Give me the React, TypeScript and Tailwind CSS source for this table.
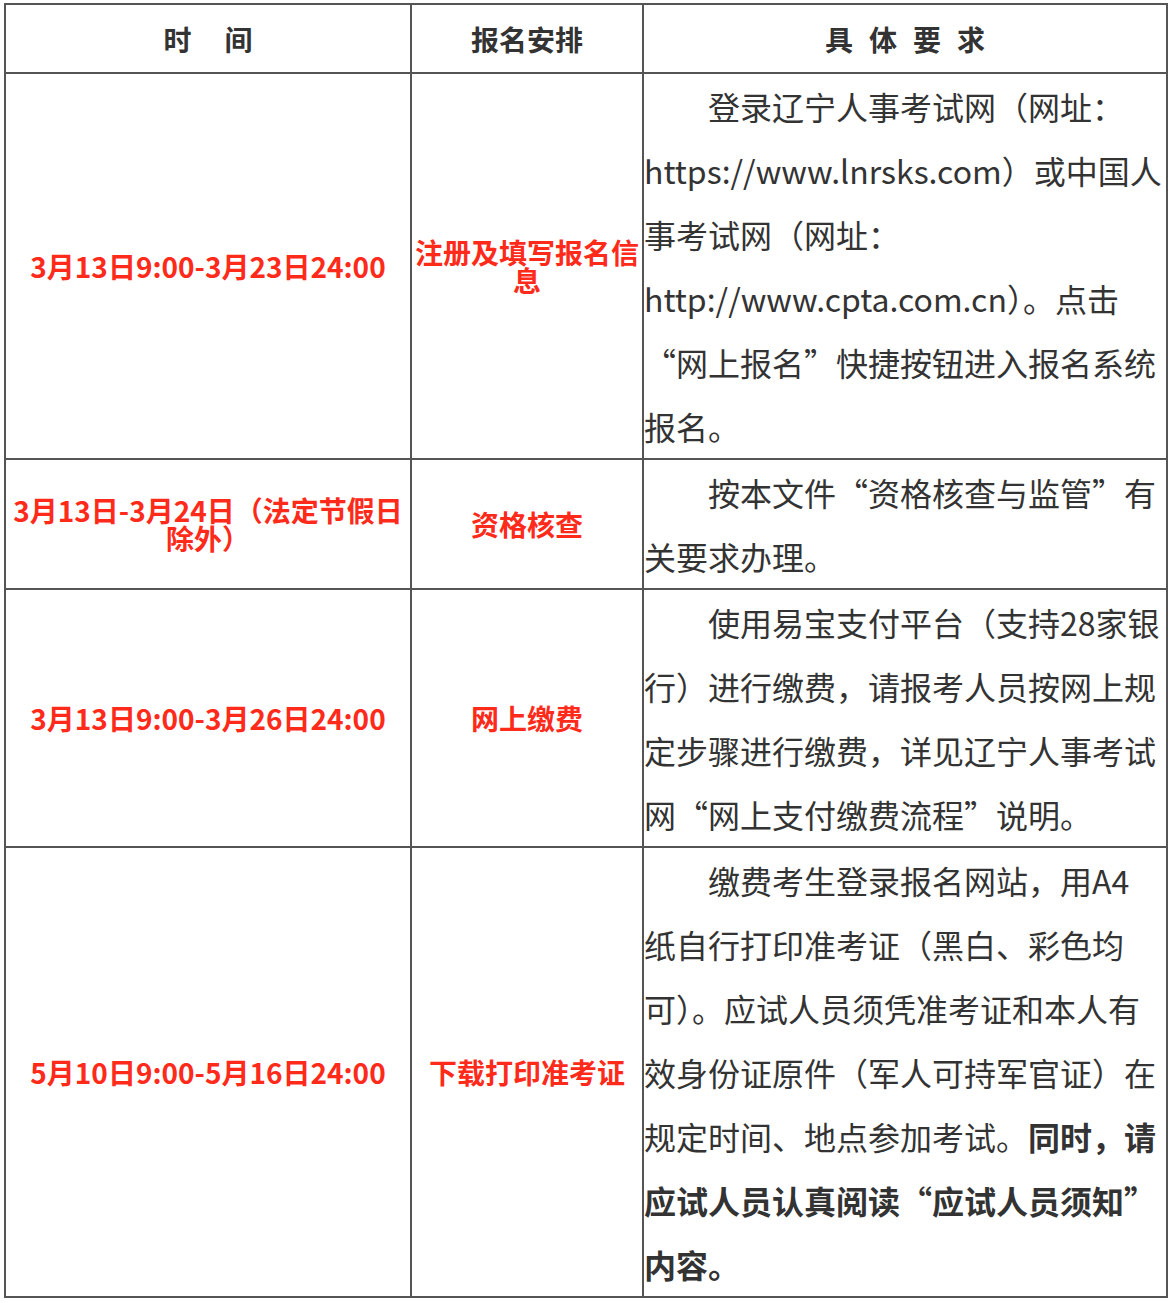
import React from "react";

interface Row {
  time: React.ReactNode;
  step: React.ReactNode;
  lines: React.ReactNode[];
}

const rows: Row[] = [
  {
    time: "3月13日9:00-3月23日24:00",
    step: "注册及填写报名信息",
    lines: [
      "登录辽宁人事考试网（网址：",
      "https://www.lnrsks.com）或中国人",
      "事考试网（网址：",
      "http://www.cpta.com.cn）。点击",
      "“网上报名”快捷按钮进入报名系统",
      "报名。",
    ],
  },
  {
    time: "3月13日-3月24日（法定节假日除外）",
    step: "资格核查",
    lines: ["按本文件“资格核查与监管”有", "关要求办理。"],
  },
  {
    time: "3月13日9:00-3月26日24:00",
    step: "网上缴费",
    lines: [
      "使用易宝支付平台（支持28家银",
      "行）进行缴费，请报考人员按网上规",
      "定步骤进行缴费，详见辽宁人事考试",
      "网“网上支付缴费流程”说明。",
    ],
  },
  {
    time: "5月10日9:00-5月16日24:00",
    step: "下载打印准考证",
    lines: [
      "缴费考生登录报名网站，用A4",
      "纸自行打印准考证（黑白、彩色均",
      "可）。应试人员须凭准考证和本人有",
      "效身份证原件（军人可持军官证）在",
      <>
        规定时间、地点参加考试。<b>同时，请</b>
      </>,
      <b>应试人员认真阅读“应试人员须知”</b>,
      <b>内容。</b>,
    ],
  },
];

const cell = "border-2 border-[#555] align-middle p-0";
const red = "text-[#ff2a1a] font-bold text-[28px] leading-[28px] text-center px-[2px]";

export default function App() {
  return (
    <div className="bg-white w-[1172px] h-[1303px] pt-[3px] pl-[4px] font-['Noto_Sans_CJK_SC','Noto_Sans',sans-serif] text-[#333]">
      <table className="border-collapse table-fixed w-[1162px]">
        <colgroup>
          <col className="w-[406px]" />
          <col className="w-[232px]" />
          <col className="w-[524px]" />
        </colgroup>
        <thead>
          <tr className="h-[69px]">
            <th className={cell}>
              <div className="flex justify-center gap-[33px] text-[28px] font-bold leading-[28px]">
                <span>时</span>
                <span>间</span>
              </div>
            </th>
            <th className={cell}>
              <div className="text-[28px] font-bold leading-[28px]">报名安排</div>
            </th>
            <th className={cell}>
              <div className="flex justify-center gap-[16px] text-[28px] font-bold leading-[28px]">
                <span>具</span>
                <span>体</span>
                <span>要</span>
                <span>求</span>
              </div>
            </th>
          </tr>
        </thead>
        <tbody>
          {rows.map((row, i) => (
            <tr key={i}>
              <td className={cell}>
                <div className={red}>{row.time}</div>
              </td>
              <td className={cell}>
                <div className={red}>{row.step}</div>
              </td>
              <td className={cell}>
                <div className="text-[32px] leading-[64px] whitespace-nowrap">
                  {row.lines.map((line, j) => (
                    <div key={j} className={j === 0 ? "pl-[64px]" : ""}>
                      {line}
                    </div>
                  ))}
                </div>
              </td>
            </tr>
          ))}
        </tbody>
      </table>
    </div>
  );
}
